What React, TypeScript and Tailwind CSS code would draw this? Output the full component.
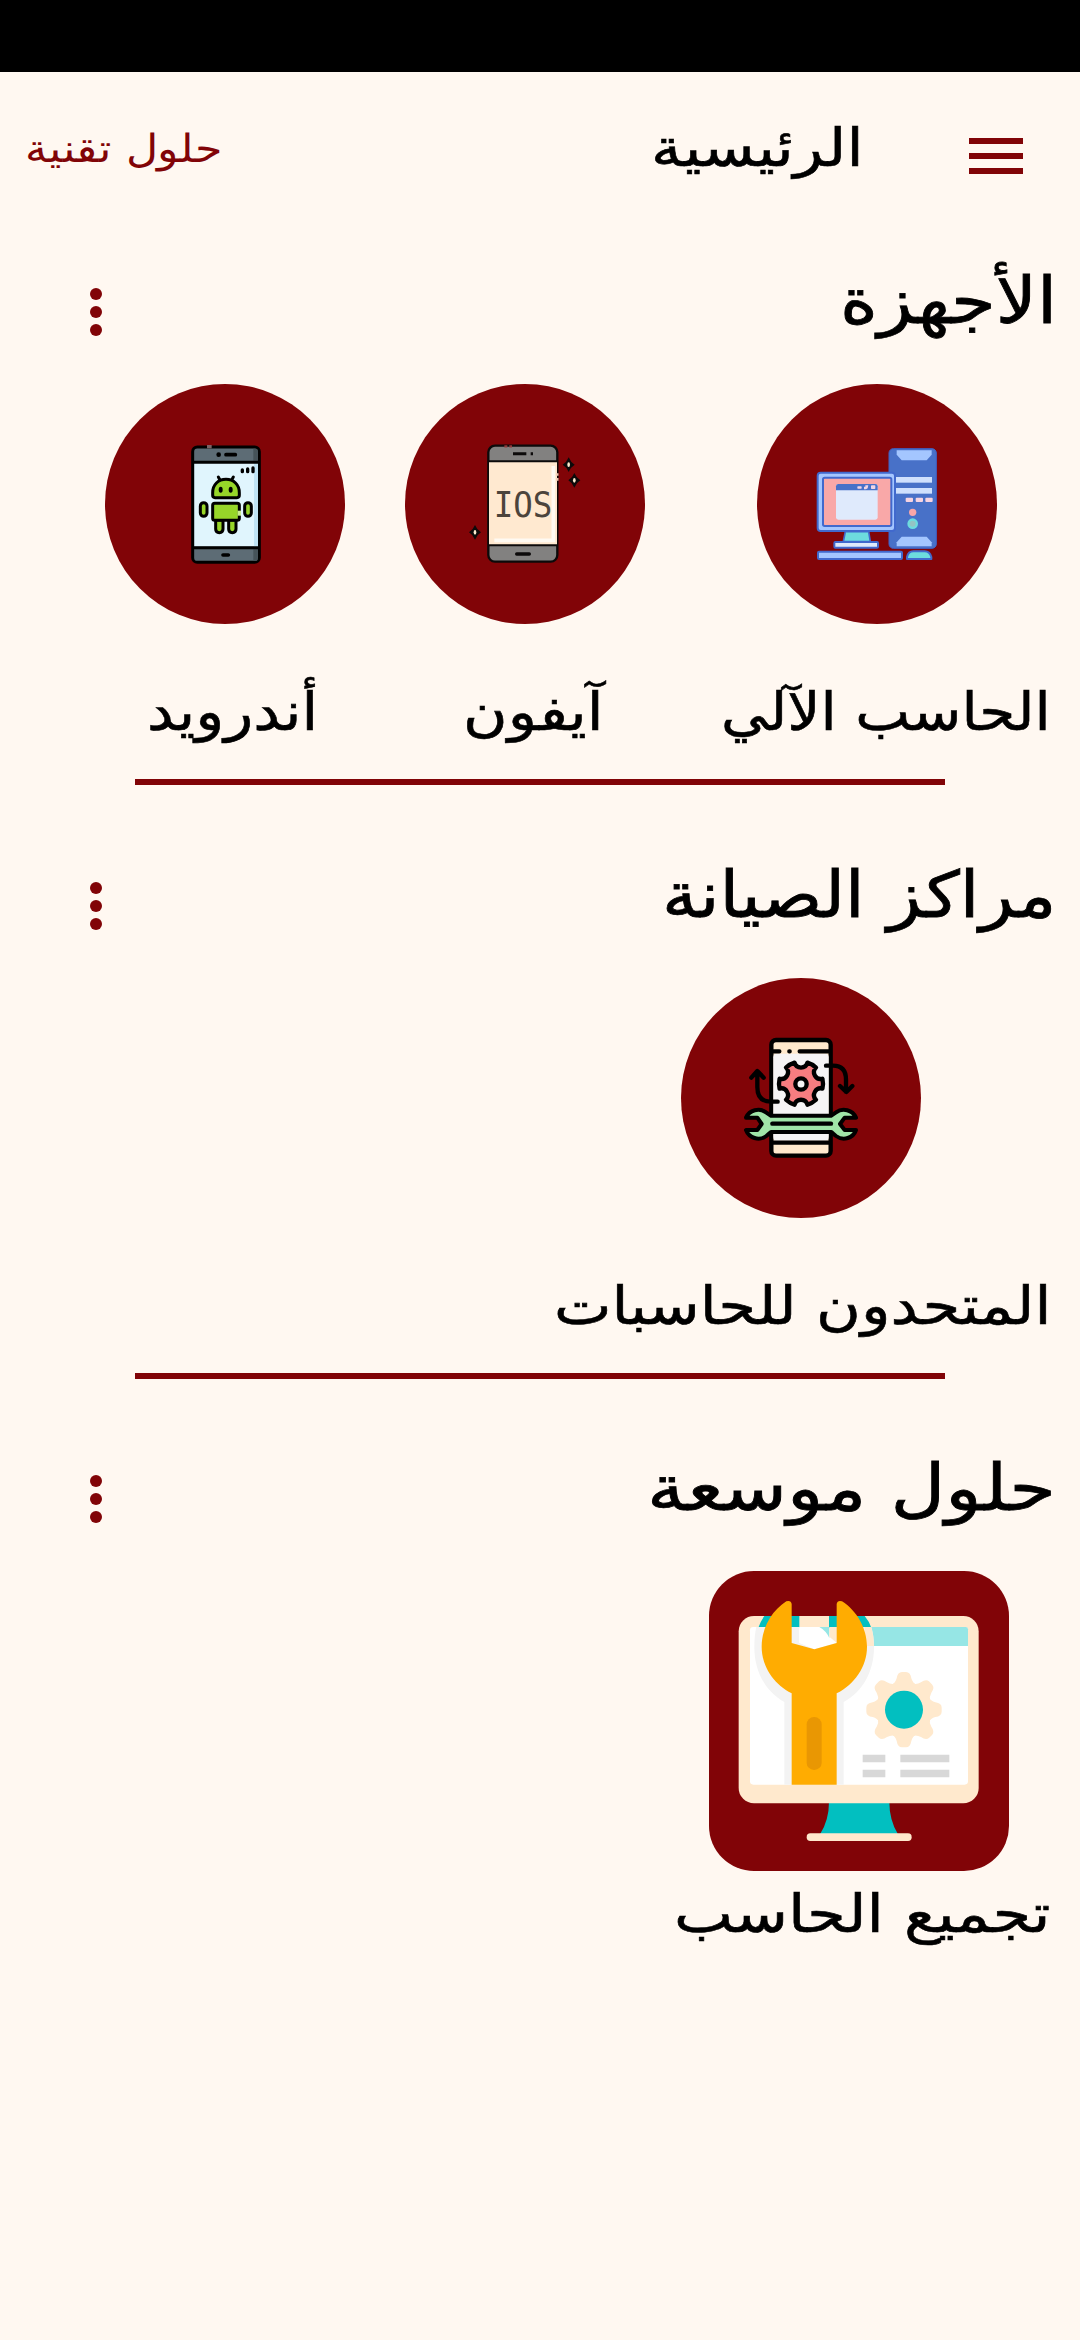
import React, { useLayoutEffect, useRef, useState } from "react";

/** A single line of text, condensed or widened horizontally to fill its box. */
function FitText({ children, className }: { children: string; className: string }) {
  const box = useRef<HTMLDivElement>(null);
  const text = useRef<HTMLSpanElement>(null);
  const [scale, setScale] = useState(1);
  useLayoutEffect(() => {
    if (box.current && text.current) {
      setScale(box.current.clientWidth / text.current.offsetWidth);
    }
  }, [children]);
  return (
    <div ref={box} className={"shrink-0 whitespace-nowrap " + className}>
      <span ref={text} className="inline-block origin-right" style={{ transform: `scaleX(${scale})` }}>
        {children}
      </span>
    </div>
  );
}

function ComputerIcon() {
  return (
    <svg viewBox="52 42 720 720" className="size-full">
      <rect x="448" y="236" width="142" height="299" rx="13" fill="#4871c8" stroke="#3f62c6" strokeWidth="3" />
      <path d="M471 241h105v13l-15 17h-75l-15-17z" fill="#a4c6ff" />
      <path d="M471 529h105v-12l-15-17h-75l-15 17z" fill="#a4c6ff" />
      <rect x="466" y="321" width="111" height="17" fill="#cfe0fd" />
      <rect x="466" y="354" width="111" height="17" fill="#cfe0fd" />
      <g fill="#f6d3e0">
        <rect x="498" y="383" width="22" height="13" rx="3" />
        <rect x="528" y="383" width="22" height="13" rx="3" />
        <rect x="557" y="383" width="22" height="13" rx="3" />
      </g>
      <circle cx="519" cy="427" r="11" fill="#f9a6a8" />
      <circle cx="519" cy="461" r="16" fill="#6ddcde" />
      <circle cx="519" cy="461" r="9" fill="#94c4c4" />
      <rect x="234" y="308" width="232" height="175" rx="9" fill="#a4c6ff" stroke="#4169cd" strokeWidth="6" />
      <rect x="250" y="323" width="205" height="145" rx="5" fill="#f9a8a8" stroke="#4169cd" strokeWidth="6" />
      <rect x="289" y="342" width="125" height="107" rx="7" fill="#dfeafc" />
      <path d="M289 361v-12q0-7 7-7h111q7 0 7 7v12z" fill="#4871c8" />
      <g fill="#efd5e5">
        <rect x="353" y="349" width="13" height="7" rx="2" />
        <path d="M373 350l4 0 0-4 9 0-2 9-5 3-6 0z" />
        <rect x="394" y="346" width="13" height="11" rx="2" />
      </g>
      <path d="M317 485h70l5 30h-81z" fill="#6ddcde" stroke="#4169cd" strokeWidth="5" />
      <rect x="284" y="516" width="131" height="17" rx="3" fill="#dfeafc" stroke="#4169cd" strokeWidth="6" />
      <rect x="235" y="545" width="252" height="22" rx="3" fill="#a4c6ff" stroke="#4169cd" strokeWidth="6" />
      <path d="M502 567v-6q4-17 19-17h34q15 0 20 17v6z" fill="#6ddcde" stroke="#4169cd" strokeWidth="6" strokeLinejoin="round" />
    </svg>
  );
}

function Sparkle({ x, y }: { x: number; y: number }) {
  return (
    <g transform={`translate(${x} ${y})`}>
      <path d="M0-22Q6-7 18 0Q6 7 0 22Q-6 7-18 0Q-6-7 0-22z" fill="#0c0a0a" />
      <ellipse rx="4" ry="7" fill="#fdeccf" />
    </g>
  );
}

function IosIcon() {
  return (
    <svg viewBox="45 42 720 720" className="size-full">
      <rect x="295" y="227" width="207" height="348" rx="20" fill="#828180" stroke="#0c0a0a" strokeWidth="7" />
      <rect x="297" y="275" width="204" height="251" fill="#ffe9d0" />
      <path d="M313 511H490V288" fill="none" stroke="#fffaf2" strokeWidth="11" />
      <path d="M297 274H501M297 526H501" stroke="#0c0a0a" strokeWidth="6" />
      <path d="M369 251h40M422 251h7" stroke="#0c0a0a" strokeWidth="9" />
      <path d="M380 552h38" stroke="#0c0a0a" strokeWidth="10" strokeLinecap="round" />
      <path d="M343 229h9M358 229h8" stroke="#8e3a3a" strokeWidth="7" />
      <path d="M502 310v7M502 324v8" stroke="#f3c9b4" strokeWidth="7" />
      <text
        x="311" y="440" direction="ltr" fontSize="105" textLength="176" lengthAdjust="spacingAndGlyphs"
        fill="#4c443c" className="font-['DejaVu_Sans_Mono',monospace]"
      >
        IOS
      </text>
      <Sparkle x={536} y={284} />
      <Sparkle x={553} y={331} />
      <Sparkle x={255} y={487} />
    </svg>
  );
}

function AndroidIcon() {
  return (
    <svg viewBox="45 42 720 720" className="size-full">
      <rect x="308" y="231" width="200" height="346" rx="14" fill="#5d6c75" stroke="#000" strokeWidth="9" />
      <path d="M490 236h8q5 0 5 6v30h-13zM490 538h13v30q0 5-5 5h-8z" fill="#465359" />
      <rect x="313" y="278" width="191" height="252" fill="#e0f5fd" />
      <path d="M492 280h12v250h-12z" fill="#bfe3f4" />
      <path d="M309 277H507M309 533H507" stroke="#000" strokeWidth="9" />
      <path d="M351 230h14" stroke="#7c6365" strokeWidth="10" />
      <circle cx="386" cy="254" r="7" />
      <path d="M408 254h28M399 555h16" stroke="#000" strokeWidth="11" strokeLinecap="round" />
      <path d="M457 300v5M473 297v8M489 294v11" stroke="#000" strokeWidth="10" strokeLinecap="round" />
      <path d="M385 321l5 9M430 321l-5 9" stroke="#000" strokeWidth="9" strokeLinecap="round" />
      <g fill="#97d629" stroke="#000" strokeWidth="9">
        <path d="M368 376v-8c0-24 17-40 40-40s40 16 40 40v8q0 7-7 7h-66q-7 0-7-7z" />
        <rect x="331" y="398" width="20" height="41" rx="10" />
        <rect x="464" y="398" width="20" height="41" rx="10" />
        <path d="M377 450h22v27q0 11-11 11t-11-11zM416 450h22v27q0 11-11 11t-11-11z" />
        <rect x="368" y="400" width="80" height="51" rx="6" />
      </g>
      <path d="M443 422h10v15h-10z" fill="#c9ec91" />
      <ellipse cx="392" cy="359" rx="6" ry="9" />
      <ellipse cx="422" cy="359" rx="6" ry="9" />
    </svg>
  );
}

/** Outline of a gear with six teeth and round notches between them. */
function gearOutline(cx: number, cy: number, r: number) {
  const at = (deg: number) => {
    const a = (deg * Math.PI) / 180;
    return `${(cx + r * Math.cos(a)).toFixed(1)} ${(cy + r * Math.sin(a)).toFixed(1)}`;
  };
  let d = `M${at(-13)}`;
  for (let k = 0; k < 6; k++) {
    d += `A${r} ${r} 0 0 1 ${at(k * 60 + 13)}A20 20 0 0 0 ${at(k * 60 + 47)}`;
  }
  return d + "z";
}

function RepairIcon() {
  return (
    <svg viewBox="33 24 720 720" className="size-full">
      <rect x="304" y="210" width="178" height="347" rx="14" fill="#ffe9cd" stroke="#000" strokeWidth="13" />
      <path d="M310 262q0-11 10-11h146q10 0 10 11v238q0 12-10 12H320q-10 0-10-12z" fill="#f6f4f5" />
      <path d="M310 244h18M358 244h1M389 244h88M310 518h166" stroke="#000" strokeWidth="13" strokeLinecap="round" />
      <path d={gearOutline(393, 341, 66)} fill="#f77d80" stroke="#000" strokeWidth="13" strokeLinejoin="round" />
      <circle cx="393" cy="342" r="17" fill="#f6f4f5" stroke="#000" strokeWidth="13" />
      <path
        d="M468 287h21q39 0 39 42v36M510 348l19 18 18-18M323 395h-20q-41 0-41-44v-45M244 323l18-20 19 20"
        fill="none" stroke="#000" strokeWidth="13" strokeLinecap="round" strokeLinejoin="round"
      />
      <path
        d="M228 443c10-23 40-31 60-16q10 7 15 10h180q5-3 15-10c20-15 50-7 60 16h-34l-14 19 14 18h34c-8 24-38 34-60 18q-9-7-14-12H303q-6 5-14 12c-22 16-52 6-61-18h34l13-18-13-19z"
        fill="#a0e5a8" stroke="#000" strokeWidth="12" strokeLinejoin="round"
      />
      <path d="M307 461h176" stroke="#000" strokeWidth="13" strokeLinecap="round" />
    </svg>
  );
}

function AssemblyIcon() {
  return (
    <svg viewBox="58 63 900 900" className="size-full">
      <path d="M418 755H599q0 55 26 98H391q27-43 27-98z" fill="#02bfc0" />
      <rect x="351" y="850" width="315" height="23" rx="11" fill="#ffe9cd" />
      <rect x="147" y="198" width="720" height="562" rx="46" fill="#ffe9cd" />
      <rect x="181" y="231" width="654" height="473" rx="10" fill="#fff" />
      <path d="M540 231h288q7 0 7 7v50H540z" fill="#96e6e5" />
      <path d="M206 233q8-21 18-35h105v35zM418 198h107q14 17 20 35H418z" fill="#02bfc0" />
      <path d="M200 231h128v47l46 18 64-18v-47h107q8 25 8 60c0 75-35 135-91 165v248H284V456c-55-30-90-90-90-165q0-35 6-60z" fill="#f3f3f3" />
      <path d="M329 231h60q30 10 49 47l-64 20-45-20z" fill="#fff" />
      <path d="M389 231h30v33q-10-22-30-33z" fill="#96e6e5" />
      <path d="M419 231h22v47l-22-18zM525 231h20q7 25 8 57h-28z" fill="#ffe9cd" />
      <path d="M306 704V430c-53-26-90-80-90-140 0-56 30-108 74-136q14-4 16 8V279l68 19 67-19V162q2-12 16-8c44 28 75 80 75 136 0 60-38 114-91 140V704z" fill="#ffac01" />
      <rect x="351" y="501" width="45" height="159" rx="22" fill="#e99703" />
      <g fill="#ffe9cd">
        <circle cx="643" cy="479" r="84" />
        {[0, 45, 90, 135, 180, 225, 270, 315].map((a) => (
          <path key={a} d="M606 405q11-6 15-20 3-19 16-19h12q13 0 16 19 4 14 15 20z" transform={`rotate(${a} 643 479)`} />
        ))}
      </g>
      <circle cx="643" cy="479" r="57" fill="#02bfc0" />
      <path d="M519 614h68v23h-68zM632 614h147v23H632zM519 659h68v23h-68zM632 659h147v23H632z" fill="#d8d8d8" />
    </svg>
  );
}

function MoreDots() {
  return (
    <button aria-label="المزيد" className="mt-[26px] ml-[90px] flex h-12 w-3 flex-col justify-between">
      <span className="size-3 rounded-full bg-[#810407]" />
      <span className="size-3 rounded-full bg-[#810407]" />
      <span className="size-3 rounded-full bg-[#810407]" />
    </button>
  );
}

function SectionHeader({ title, className }: { title: string; className: string }) {
  return (
    <div className="flex h-20 justify-between">
      <FitText className={"text-[64px] leading-[78px] [-webkit-text-stroke:0.8px_black] " + className}>{title}</FitText>
      <MoreDots />
    </div>
  );
}

function Disc({ className, children }: { className: string; children: React.ReactNode }) {
  return <div className={"size-60 rounded-full bg-[#810407] " + className}>{children}</div>;
}

const label = "h-[70px] text-[53px] leading-[69px] [-webkit-text-stroke:0.6px_black] ";

export default function App() {
  return (
    <div dir="rtl" className="h-[2340px] w-[1080px] overflow-hidden bg-[#fff8f1] font-['DejaVu_Sans',sans-serif] text-black">
      <div className="h-[72px] bg-black" />
      <header className="flex h-[168px] items-start pt-9">
        <button aria-label="القائمة" className="mt-[30px] mr-[57px] flex h-9 w-[54px] flex-col justify-between">
          <span className="h-1.5 w-full bg-[#810407]" />
          <span className="h-1.5 w-full bg-[#810407]" />
          <span className="h-1.5 w-full bg-[#810407]" />
        </button>
        <FitText className="mr-[105px] w-[213px] text-[53px] leading-[79px] [-webkit-text-stroke:0.6px_black]">الرئيسية</FitText>
        <FitText className="mr-auto ml-[25px] w-[197px] text-[39px] font-extralight leading-[82px] text-[#810407]">حلول تقنية</FitText>
      </header>

      <section className="h-[593.5px] pt-[22px]">
        <SectionHeader title="الأجهزة" className="mr-[23px] w-[217px]" />
        <div className="mt-[42px] flex">
          <div className="w-[405px]">
            <Disc className="mr-[83px]"><ComputerIcon /></Disc>
            <FitText className={label + "mt-[53px] mr-[29px] w-[330px]"}>الحاسب الآلي</FitText>
          </div>
          <div className="w-[300px]">
            <Disc className="mr-[30px]"><IosIcon /></Disc>
            <FitText className={label + "mt-[53px] mr-[71px] w-[141px]"}>آيفون</FitText>
          </div>
          <div className="w-[300px]">
            <Disc className="mr-[30px]"><AndroidIcon /></Disc>
            <FitText className={label + "mt-[53px] mr-[57px] w-[171px]"}>أندرويد</FitText>
          </div>
        </div>
        <div className="mx-[135px] mt-8 h-1.5 bg-[#810407]" />
      </section>

      <section className="h-[593.5px] pt-[22px]">
        <SectionHeader title="مراكز الصيانة" className="mr-[24px] w-[394px]" />
        <Disc className="mt-[42px] mr-[159px]"><RepairIcon /></Disc>
        <FitText className={label + "mt-[53px] mr-[29px] w-[497px]"}>المتحدون للحاسبات</FitText>
        <div className="mx-[135px] mt-8 h-1.5 bg-[#810407]" />
      </section>

      <section className="pt-[22px]">
        <SectionHeader title="حلول موسعة" className="mr-[24px] w-[409px]" />
        <div className="mt-[42px] mr-[71px] size-[300px] rounded-[45px] bg-[#810407]"><AssemblyIcon /></div>
        <FitText className={label + "mt-2 mr-[30px] w-[376px]"}>تجميع الحاسب</FitText>
      </section>
    </div>
  );
}
